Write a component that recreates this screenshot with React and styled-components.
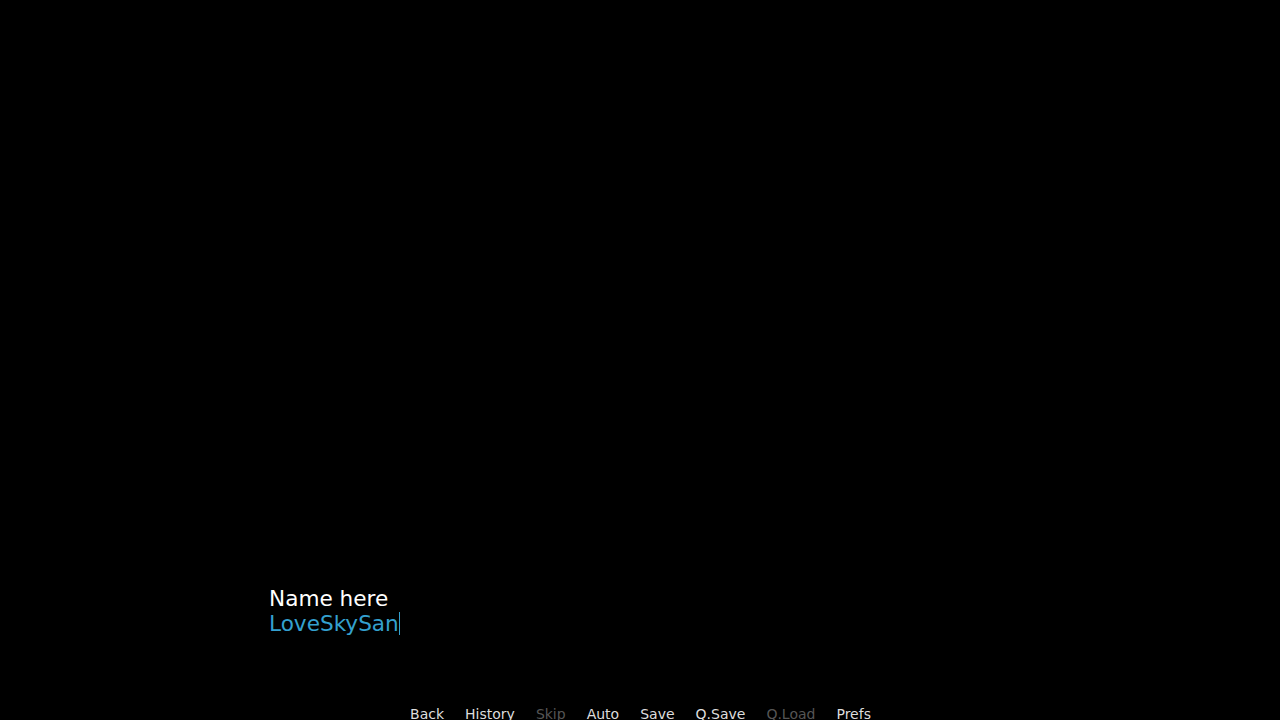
import styled, { createGlobalStyle } from "styled-components";

const GlobalStyle = createGlobalStyle`
  html, body {
    margin: 0;
    padding: 0;
    background: #000000;
  }
  body {
    font-family: "DejaVu Sans", "Liberation Sans", sans-serif;
  }
`;

const quickItems = [
  { label: "Back" },
  { label: "History" },
  { label: "Skip", disabled: true },
  { label: "Auto" },
  { label: "Save" },
  { label: "Q.Save" },
  { label: "Q.Load", disabled: true },
  { label: "Prefs" }
];

const App = () => {
  return (
    <>
      <GlobalStyle />
      <Screen>
        <InputWindow>
          <Prompt>Name here</Prompt>
          <InputLine>
            LoveSkySan
            <Caret />
          </InputLine>
        </InputWindow>
        <QuickMenu>
          {quickItems.map((item) => (
            <QuickButton key={item.label} $disabled={item.disabled}>
              {item.label}
            </QuickButton>
          ))}
        </QuickMenu>
      </Screen>
    </>
  );
};

// styled components
const Screen = styled.div`
  width: 1280px;
  height: 720px;
  background: #000000;
  display: flex;
  flex-direction: column;
  justify-content: flex-end;
  overflow: hidden;
`;

const InputWindow = styled.div`
  padding-left: 269px;
  display: flex;
  flex-direction: column;
`;

const Prompt = styled.div`
  color: #ffffff;
  font-size: 21.6px;
  line-height: 25px;
`;

const InputLine = styled.div`
  color: #34a0cf;
  font-size: 21.6px;
  line-height: 25px;
  display: flex;
  align-items: center;
`;

const Caret = styled.span`
  display: inline-block;
  width: 1px;
  height: 23px;
  background: #34a0cf;
`;

const QuickMenu = styled.div`
  margin-top: 70px;
  margin-bottom: -2px;
  display: flex;
  justify-content: center;
  gap: 21px;
  padding-left: 1px;
`;

const QuickButton = styled.span`
  font-size: 14px;
  line-height: 16px;
  color: ${(p) => (p.$disabled ? "#555555" : "#dddddd")};
`;

export default App;
